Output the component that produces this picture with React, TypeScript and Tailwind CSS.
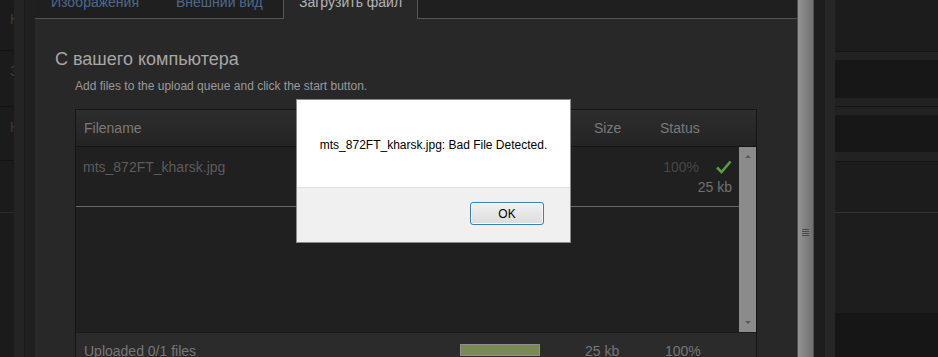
const tabs = [
  { label: 'Изображения', w: 'w-[125px]' },
  { label: 'Внешний вид', w: 'w-[123px]' },
]

function Grip() {
  return (
    <div className="flex flex-col gap-[1px]">
      <div className="h-[1px] w-[7px] bg-[#4a4a4a]" />
      <div className="h-[1px] w-[7px] bg-[#4a4a4a]" />
      <div className="h-[1px] w-[7px] bg-[#4a4a4a]" />
      <div className="h-[1px] w-[7px] bg-[#4a4a4a]" />
    </div>
  )
}

export default function App() {
  return (
    <div className="relative flex h-[357px] w-[938px] overflow-hidden bg-[#1a1a1a] font-['Liberation_Sans',Arial,sans-serif]">
      {/* page behind, left edge */}
      <div className="flex w-[14px] flex-col overflow-hidden bg-[#1b1b1b] text-[14px] leading-none text-[#3c3c3c]">
        <div className="h-[51px] shrink-0 border-b border-[#121212] pl-[10px] pt-[12px]">Н</div>
        <div className="h-[56px] shrink-0 border-b border-[#121212] pl-[10px] pt-[13px]">З</div>
        <div className="h-[54px] shrink-0 border-b border-[#121212] pl-[10px] pt-[13px]">Н</div>
        <div className="h-[52px] shrink-0 border-b border-[#2a2a2a]" />
        <div className="flex-1" />
      </div>
      <div className="w-[10px] bg-[#242424]" />
      <div className="w-[11px] border-l border-[#1b1b1b] bg-[#202020]" />

      {/* main panel */}
      <div className="flex w-[762px] flex-col overflow-hidden bg-[#282828]">
        <div className="flex h-[19px] shrink-0 bg-[#1f1f1f] text-[14px] leading-[14px]">
          {tabs.map(({ label, w }) => (
            <div key={label} className={`${w} border-b border-[#555] pl-[16px]`}>
              <div className="-mt-[5px] text-[#4d6a8c]">{label}</div>
            </div>
          ))}
          <div className="w-[135px] border-x border-[#555] bg-[#282828] pl-[15px]">
            <div className="-mt-[5px] text-[#b4b4b4]">Загрузить файл</div>
          </div>
          <div className="flex-1 border-b border-[#555]" />
        </div>

        <div className="flex shrink-0 flex-col pt-[29px]">
          <h2 className="pl-[20px] text-[18px] leading-[22px] text-[#a6a6a6]">С вашего компьютера</h2>
          <p className="mt-[8px] pl-[40px] text-[12px] leading-[16px] text-[#9a9a9a]">
            Add files to the upload queue and click the start button.
          </p>

          {/* upload table */}
          <div className="mx-[40px] mt-[15px] flex flex-col border border-[#151515] text-[14px]">
            <div className="flex h-[37px] shrink-0 items-center border-b border-[#141414] bg-linear-to-b from-[#2d2d2d] to-[#242424] leading-[18px] text-[#7a7a7a]">
              <div className="flex-1 pl-[8px]">Filename</div>
              <div className="w-[66px]">Size</div>
              <div className="w-[96px]">Status</div>
            </div>

            <div className="flex h-[185px] shrink-0 bg-[#202020]">
              <div className="flex flex-1 flex-col">
                <div className="flex h-[60px] border-b border-[#6a6a6a] pl-[7px] pr-[7px]">
                  <div className="flex-1 pt-[11px] leading-[18px] text-[#5c5c5c]">mts_872FT_kharsk.jpg</div>
                  <div className="flex flex-col items-end pt-[10px] leading-[20px]">
                    <div className="flex items-center">
                      <span className="text-[#474747]">100%</span>
                      <svg className="ml-[16px] h-[16px] w-[17px]" viewBox="0 0 17 16">
                        <path d="M2 8.5 L6.5 13 L15.5 2.5" fill="none" stroke="#5a9d3f" strokeWidth="2.6" />
                      </svg>
                    </div>
                    <span className="text-[#717171]">25 kb</span>
                  </div>
                </div>
              </div>
              <div className="flex w-[17px] flex-col items-center justify-between bg-[#8b8b8b] py-[8px]">
                <div className="h-0 w-0 border-x-[3px] border-b-[3px] border-x-transparent border-b-[#5a5a5a]" />
                <div className="h-0 w-0 border-x-[3px] border-t-[3px] border-x-transparent border-t-[#5a5a5a]" />
              </div>
            </div>

            <div className="flex h-[40px] shrink-0 items-start border-t border-[#1a1a1a] bg-[#2b2b2b] pt-[9px] leading-[18px] text-[#777]">
              <div className="w-[384px] pl-[8px]">Uploaded 0/1 files</div>
              <div className="mt-[2px] h-[12px] w-[80px] border border-[#8f8f8f] bg-[#7a8a55]" />
              <div className="ml-[45px] w-[80px]">25 kb</div>
              <div>100%</div>
            </div>
          </div>
        </div>
      </div>

      {/* outer scrollbar */}
      <div className="flex w-[17px] flex-col items-center border-x border-[#4f4f4f] bg-linear-to-r from-[#939393] to-[#707070] pt-[229px]">
        <Grip />
      </div>
      <div className="w-[11px] bg-[#1d1d1d]" />
      <div className="w-[10px] bg-[#262626]" />

      {/* page behind, right edge */}
      <div className="flex w-[103px] flex-col">
        <div className="h-[52px] shrink-0 border-b border-[#141414] bg-[#1c1c1c]" />
        <div className="h-[8px] shrink-0 bg-[#222]" />
        <div className="h-[38px] shrink-0 bg-[#171717]" />
        <div className="h-[9px] shrink-0 border-b border-[#141414] bg-[#222]" />
        <div className="h-[8px] shrink-0 bg-[#222]" />
        <div className="h-[37px] shrink-0 bg-[#171717]" />
        <div className="h-[10px] shrink-0 border-b border-[#141414] bg-[#222]" />
        <div className="h-[51px] shrink-0 border-b border-[#333] bg-[#1c1c1c]" />
        <div className="h-[100px] shrink-0 bg-[#1d1d1d]" />
        <div className="flex-1 bg-[#161616]" />
      </div>

      {/* alert dialog */}
      <div className="absolute left-[296px] top-[99px] flex h-[144px] w-[275px] flex-col border border-[#8a8a8a] bg-white">
        <div className="flex h-[87px] items-center justify-center pt-[2px] text-[12px] text-black">
          mts_872FT_kharsk.jpg: Bad File Detected.
        </div>
        <div className="flex flex-1 justify-end border-t border-[#dfdfdf] bg-[#f0f0f0] pr-[26px] pt-[14px]">
          <button className="h-[23px] w-[74px] rounded-[3px] border border-[#3c7fb1] bg-linear-to-b from-[#f2f2f2] to-[#dcdcdc] text-[12px] text-black shadow-[inset_0_0_0_1px_#fafafa]">
            OK
          </button>
        </div>
      </div>
    </div>
  )
}
